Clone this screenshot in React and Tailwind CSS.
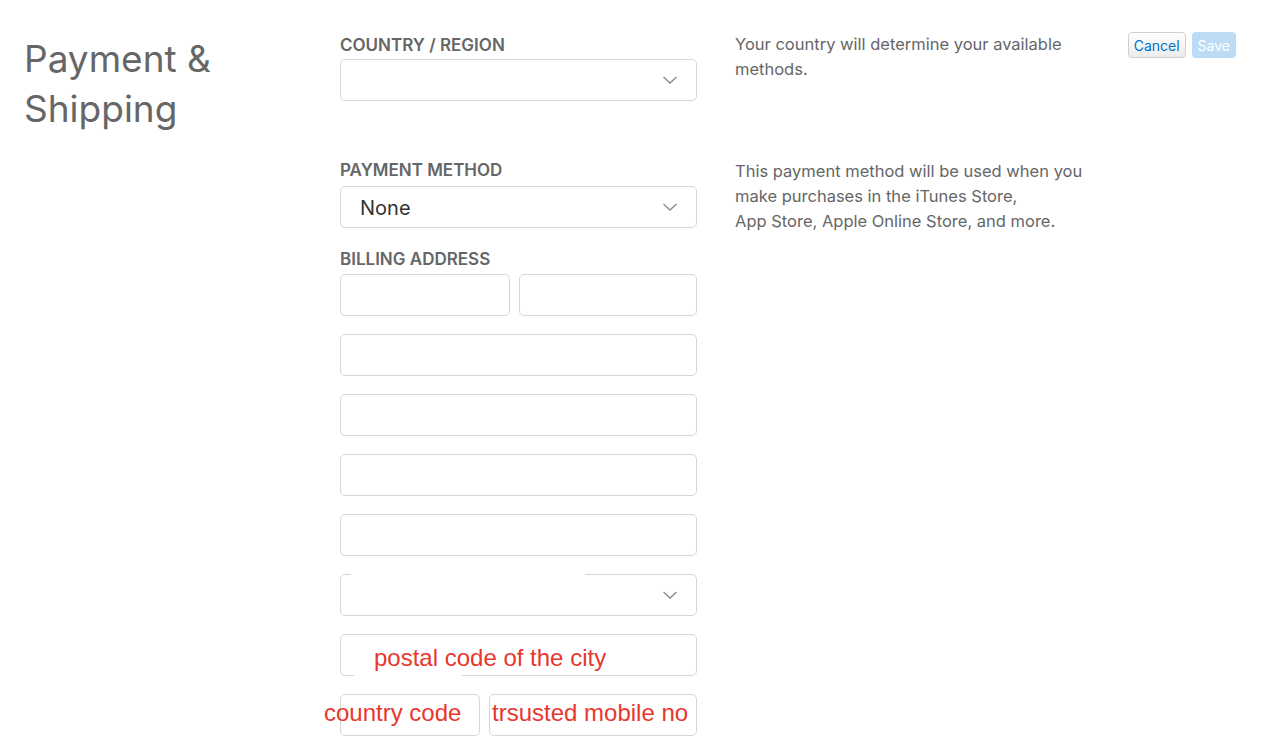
import React from "react";

const font = { fontFamily: "Inter, 'Liberation Sans', sans-serif" };

function Chevron() {
  return (
    <svg width="16" height="10" viewBox="0 0 16 10" className="absolute right-[18px] top-1/2 -translate-y-1/2">
      <path d="M1.5 2 L8 8 L14.5 2" fill="none" stroke="#8a8a8a" strokeWidth="1.3" />
    </svg>
  );
}

function Box({ className = "", children }) {
  return (
    <div className={`relative h-[42px] rounded-[5px] border border-[#d6d6d6] bg-white ${className}`}>{children}</div>
  );
}

function Label({ children, className = "" }) {
  return (
    <div className={`text-[17px] leading-[22px] font-semibold text-[#666] ${className}`}>{children}</div>
  );
}

export default function App() {
  return (
    <div className="relative min-h-[749px] bg-white text-[#666]" style={font}>
      <div className="flex pl-6 pt-[34px]">
        <div className="w-[316px] shrink-0">
          <h1 className="text-[37px] leading-[50px] font-normal text-[#666]">
            Payment &amp;
            <br />
            Shipping
          </h1>
        </div>

        <div className="w-[357px] shrink-0">
          <Label className="mb-[3px]">COUNTRY / REGION</Label>
          <Box>
            <Chevron />
          </Box>

          <Label className="mt-[58px] mb-[5px]">PAYMENT METHOD</Label>
          <Box className="flex items-center pl-[19px]">
            <span className="text-[20px] text-[#333] mt-[2px]">None</span>
            <Chevron />
          </Box>

          <Label className="mt-[20px] mb-[4px]">BILLING ADDRESS</Label>
          <div className="flex flex-col gap-[18px]">
            <div className="flex gap-[9px]">
              <Box className="w-[170px]" />
              <Box className="flex-1" />
            </div>
            <Box />
            <Box />
            <Box />
            <Box />
            <Box>
              <Chevron />
            </Box>
            <Box />
            <div className="flex gap-[9px]">
              <Box className="w-[140px]" />
              <Box className="flex-1" />
            </div>
          </div>
        </div>

        <div className="ml-[38px] w-[360px] shrink-0 text-[16.5px] leading-[25px] text-[#666]">
          <p className="-mt-[2px]">Your country will determine your available methods.</p>
          <p className="mt-[77px]">
            This payment method will be used when you make purchases in the iTunes Store,
            <br />
            App Store, Apple Online Store, and more.
          </p>
        </div>

        <div className="ml-auto mr-[25px] flex gap-[6px] -mt-[2px]">
          <button className="h-[26px] rounded-[4px] border border-[#cfcfcf] bg-gradient-to-b from-white to-[#ececec] px-[5px] text-[14px] text-[#0070c9]">
            Cancel
          </button>
          <button className="h-[26px] rounded-[4px] bg-[#bcdcf6] px-[6px] text-[14px] text-white">
            Save
          </button>
        </div>
      </div>

      <div className="absolute left-[351px] top-[572px] h-[4px] w-[234px] bg-white" />
      <div className="absolute left-[354px] top-[673px] h-[4px] w-[108px] bg-white" />
      <div
        className="absolute left-[374px] top-[642px] text-[24px] leading-[32px] text-[#e8372e]"
        style={{ fontFamily: "'Liberation Sans', Arial, sans-serif" }}
      >
        postal code of the city
      </div>
      <div
        className="absolute left-[324px] top-[697px] text-[24px] leading-[32px] text-[#e8372e]"
        style={{ fontFamily: "'Liberation Sans', Arial, sans-serif" }}
      >
        country code
      </div>
      <div
        className="absolute left-[492px] top-[697px] text-[24px] leading-[32px] text-[#e8372e]"
        style={{ fontFamily: "'Liberation Sans', Arial, sans-serif" }}
      >
        trsusted mobile no
      </div>
    </div>
  );
}
